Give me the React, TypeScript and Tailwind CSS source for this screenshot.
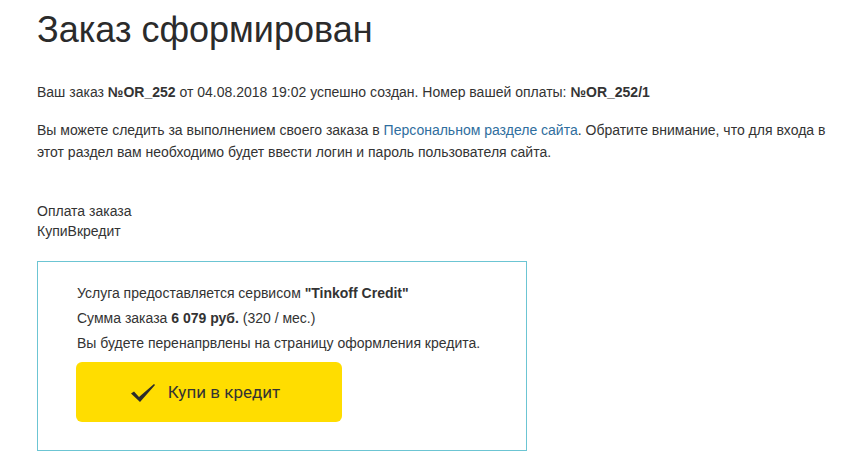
export default function App() {
  return (
    <main className="min-h-screen bg-white pl-[37px] pt-[8px] text-[#333] font-['Liberation_Sans',Arial,sans-serif]">
      <h1 className="text-[36px] leading-[44px] font-normal text-[#2b2b2b]">
        Заказ сформирован
      </h1>

      <p className="mt-[30px] text-[14px] leading-[20px]">
        Ваш заказ <b>№OR_252</b> от 04.08.2018 19:02 успешно создан. Номер
        вашей оплаты: <b>№OR_252/1</b>
      </p>

      <p className="mt-[17px] w-[800px] text-[14px] leading-[22px]">
        Вы можете следить за выполнением своего заказа в{" "}
        <a href="#" className="text-[#2f6e9e]">
          Персональном разделе сайта
        </a>
        . Обратите внимание, что для входа в этот раздел вам необходимо будет
        ввести логин и пароль пользователя сайта.
      </p>

      <div className="mt-[38px] text-[14px] leading-[20px]">
        <div>Оплата заказа</div>
        <div>КупиВкредит</div>
      </div>

      <div className="mt-[20px] w-[490px] h-[190px] border border-[#6cc5d3] pl-[39px] pt-[19px]">
        <div className="text-[14px] leading-[25px]">
          <p>
            Услуга предоставляется сервисом <b>"Tinkoff Credit"</b>
          </p>
          <p>
            Сумма заказа <b>6 079 руб.</b> (320 / мес.)
          </p>
          <p>Вы будете перенапрвлены на страницу оформления кредита.</p>
        </div>

        <button className="mt-[6px] -ml-px flex h-[60px] w-[266px] items-center justify-center gap-[12px] rounded-[6px] bg-[#ffdd00] pr-[8px] text-[#333]">
          <svg width="26" height="20" viewBox="0 0 26 20" className="mt-[2px]">
            <path
              d="M1 10.5 L4 8.5 L9 14 L24 1 L25 2 L10 19 Z"
              fill="#2b2b2b"
            />
          </svg>
          <span className="font-['Roboto',Arial,sans-serif] text-[17px] leading-none">
            Купи в кредит
          </span>
        </button>
      </div>
    </main>
  );
}
